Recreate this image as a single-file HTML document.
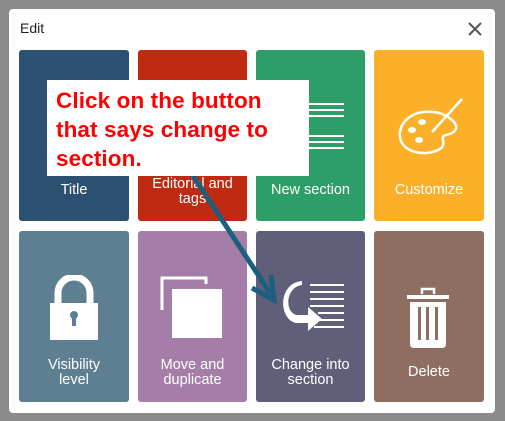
<!DOCTYPE html>
<html><head><style>
body{margin:0;width:505px;height:421px;background:#8a8a8a;position:relative;overflow:hidden;font-family:"Liberation Sans",sans-serif}
.m{position:absolute;left:9px;top:9px;width:486px;height:404px;background:#fff;border-radius:4px}
.t{position:absolute;border-radius:3px;color:#fff;font-size:14.5px;text-align:center;line-height:15px}
.t span{position:absolute;left:0;right:0}
.cb{position:absolute;left:47px;top:80px;width:262px;height:96px;background:#fff;color:#f00;font-weight:bold;font-size:22.5px;line-height:29px;padding:6px 0 0 9px;box-sizing:border-box;letter-spacing:0.1px}
svg{position:absolute}
</style></head><body>
<div class="m"></div>
<div style="position:absolute;left:20px;top:20px;font-size:14px;color:#222">Edit</div>
<svg style="left:467px;top:21px" width="16" height="16"><path d="M2 2L14 14M14 2L2 14" stroke="#555" stroke-width="2"/></svg>

<div class="t" style="left:19px;top:50px;width:110px;height:171px;background:#2b5070"><span style="top:133px">Title</span></div>
<div class="t" style="left:138px;top:50px;width:109px;height:171px;background:#bf2a12"><span style="top:127px">Editorial and<br>tags</span></div>
<div class="t" style="left:256px;top:50px;width:109px;height:171px;background:#2e9e68"><span style="top:133px">New section</span>
<svg style="left:50px;top:50px" width="45" height="50"><g stroke="#fff" stroke-width="2"><path d="M0 4H38M0 10H38M0 16H38M0 36H38M0 42H38M0 48H38"/></g></svg></div>
<div class="t" style="left:374px;top:50px;width:110px;height:171px;background:#fbb02a"><span style="top:133px">Customize</span>
<svg style="left:20px;top:45px" width="75" height="70"><path d="M38 17C18 15 4 28 6 42C8 58 32 62 46 54C54 48 44 42 52 40C62 38 66 32 58 25C52 20 46 17 38 17Z" fill="none" stroke="#fff" stroke-width="2.5"/><ellipse cx="28" cy="27" rx="4" ry="3" fill="#fff"/><ellipse cx="18" cy="35" rx="4" ry="3" fill="#fff"/><ellipse cx="25" cy="45" rx="4" ry="3" fill="#fff"/><path d="M38 37L68 4" stroke="#fff" stroke-width="2.5"/></svg></div>

<div class="t" style="left:19px;top:231px;width:110px;height:171px;background:#5e7e92"><span style="top:127px">Visibility<br>level</span>
<svg style="left:30px;top:44px" width="50" height="66"><path d="M9 28V18A16 16 0 0 1 41 18V28" fill="none" stroke="#fff" stroke-width="7"/><rect x="1" y="28" width="48" height="37" fill="#fff"/><circle cx="25" cy="40" r="4" fill="#5e7e92"/><rect x="23" y="40" width="4" height="11" fill="#5e7e92"/></svg></div>
<div class="t" style="left:138px;top:231px;width:109px;height:171px;background:#a47ea8"><span style="top:127px">Move and<br>duplicate</span>
<svg style="left:22px;top:45px" width="65" height="65"><path d="M28 2H2V34" fill="none" stroke="#fff" stroke-width="3"/><path d="M28 2H46V8" fill="none" stroke="#fff" stroke-width="3"/><rect x="12" y="13" width="50" height="49" fill="#fff"/></svg></div>
<div class="t" style="left:256px;top:231px;width:109px;height:171px;background:#5f5f7a"><span style="top:127px">Change into<br>section</span>
<svg style="left:24px;top:50px" width="70" height="60"><g stroke="#fff" stroke-width="2"><path d="M30 4H64M30 11H64M30 18H64M30 25H64M38 32H64M38 39H64M34 46H64"/></g><path d="M22 4C6 6 4 30 16 34H28V26L42 38L28 50V42H16C-2 38 -2 2 22 0Z" fill="#fff"/><path d="M22 6C12 10 12 22 18 25" fill="none" stroke="#5f5f7a" stroke-width="3"/></svg></div>
<div class="t" style="left:374px;top:231px;width:110px;height:171px;background:#8e6e60"><span style="top:134px">Delete</span>
<svg style="left:33px;top:55px" width="45" height="65"><path d="M15 8V3H27V8" fill="none" stroke="#fff" stroke-width="2.5"/><rect x="0" y="9" width="42" height="4" fill="#fff"/><path d="M3 16H39V58Q39 62 35 62H7Q3 62 3 58Z" fill="#fff"/><g fill="#8e6e60"><rect x="11" y="21" width="3" height="33"/><rect x="19" y="21" width="3" height="33"/><rect x="28" y="21" width="3" height="33"/></g></svg></div>

<svg style="left:0;top:0" width="505" height="421"><path d="M186 165L270 293" stroke="#1b5e7e" stroke-width="5"/><path d="M252 288L274 300L271 275" fill="none" stroke="#1b5e7e" stroke-width="5"/></svg>
<div class="cb">Click on the button<br>that says change to<br>section.</div>
</body></html>
